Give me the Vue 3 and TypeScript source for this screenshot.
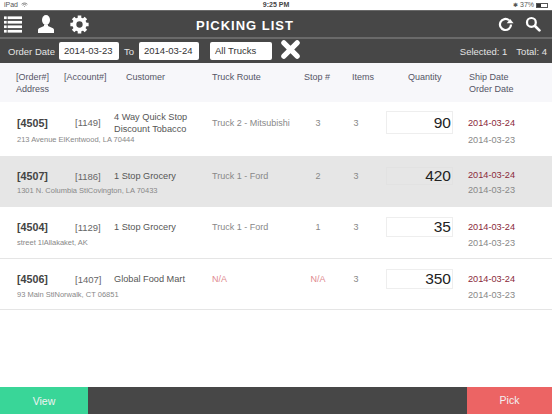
<script setup lang="ts">
interface PickRow {
  order: string;
  account: string;
  customer: string[];
  route: string;
  stop: string;
  items: string;
  qty: string;
  address: string;
  selected?: boolean;
}

const rows: PickRow[] = [
  { order: "[4505]", account: "[1149]", customer: ["4 Way Quick Stop", "Discount Tobacco"], route: "Truck 2 - Mitsubishi", stop: "3", items: "3", qty: "90", address: "213 Avenue ElKentwood, LA 70444" },
  { order: "[4507]", account: "[1186]", customer: ["1 Stop Grocery"], route: "Truck 1 - Ford", stop: "2", items: "3", qty: "420", address: "1301 N. Columbia StlCovington, LA 70433", selected: true },
  { order: "[4504]", account: "[1129]", customer: ["1 Stop Grocery"], route: "Truck 1 - Ford", stop: "1", items: "3", qty: "35", address: "street 1lAllakaket, AK" },
  { order: "[4506]", account: "[1407]", customer: ["Global Food Mart"], route: "N/A", stop: "N/A", items: "3", qty: "350", address: "93 Main StlNorwalk, CT 06851" },
];
</script>

<template>
  <div class="screen">
    <div class="status">
      <span class="status-left">
        iPad
        <svg class="wifi" viewBox="0 0 12 9" fill="none" stroke="#555" stroke-width="1.2">
          <path d="M1 3.2a7 7 0 0 1 10 0M2.8 5a4.4 4.4 0 0 1 6.4 0" />
          <circle cx="6" cy="7.2" r="0.8" fill="#555" stroke="none" />
        </svg>
      </span>
      <span class="status-time">9:25 PM</span>
      <span class="status-right">
        <span class="bt">✱</span> 37%
        <span class="battery"><span class="battery-fill" /></span>
      </span>
    </div>

    <header class="nav">
      <div class="nav-icons">
        <svg class="ic-list" viewBox="0 0 20 20" fill="#fff">
          <rect x="0" y="1" width="3" height="3" />
          <rect x="4" y="1" width="16" height="3" />
          <rect x="0" y="6" width="3" height="3" />
          <rect x="4" y="6" width="16" height="3" />
          <rect x="0" y="11" width="3" height="3" />
          <rect x="4" y="11" width="16" height="3" />
          <rect x="0" y="16" width="3" height="3" />
          <rect x="4" y="16" width="16" height="3" />
        </svg>
        <svg class="ic-user" viewBox="0 0 16 18" fill="#fff">
          <ellipse cx="8" cy="5" rx="4" ry="5" />
          <path d="M6 9.5h4v1.6l5 2.2c.7.4 1 1 1 1.7V18H0v-3c0-.7.3-1.3 1-1.7l5-2.2z" />
        </svg>
        <svg class="ic-gear" viewBox="0 0 24 24">
          <circle cx="12" cy="12" r="6.5" fill="none" stroke="#fff" stroke-width="5" />
          <path
            d="M12 0.5v5M12 18.5v5M0.5 12h5M18.5 12h5M3.9 3.9l3.5 3.5M16.6 16.6l3.5 3.5M20.1 3.9l-3.5 3.5M7.4 16.6l-3.5 3.5"
            stroke="#fff"
            stroke-width="4.5"
          />
        </svg>
      </div>
      <h1 class="title">PICKING LIST</h1>
      <div class="nav-actions">
        <svg class="ic-refresh" viewBox="0 0 20 20" fill="none">
          <path d="M16.5 10a6.5 6.5 0 1 1-2.3-5" stroke="#fff" stroke-width="2.6" />
          <path d="M11.5 8.5h8l-4-5z" fill="#fff" />
        </svg>
        <svg class="ic-search" viewBox="0 0 20 20" fill="none" stroke="#fff">
          <circle cx="8" cy="8" r="5.5" stroke-width="2.8" />
          <path d="M12.5 12.5l5.5 5.5" stroke-width="3.4" stroke-linecap="round" />
        </svg>
      </div>
    </header>

    <div class="filter">
      <span class="filter-label">Order Date</span>
      <span class="field date">2014-03-23</span>
      <span class="filter-to">To</span>
      <span class="field date">2014-03-24</span>
      <span class="field trucks">All Trucks</span>
      <svg class="ic-clear" viewBox="0 0 20 20">
        <path d="M3 3l14 14M17 3L3 17" stroke="#fff" stroke-width="5.5" stroke-linecap="round" />
      </svg>
      <span class="counts">Selected: 1<span class="total">Total: 4</span></span>
    </div>

    <div class="head">
      <div>[Order#]<br />Address</div>
      <div>[Account#]</div>
      <div>Customer</div>
      <div>Truck Route</div>
      <div>Stop #</div>
      <div>Items</div>
      <div>Quantity</div>
      <div>Ship Date<br />Order Date</div>
    </div>

    <div class="rows">
      <div v-for="row in rows" :key="row.order" class="row" :class="{ 'is-selected': row.selected }">
        <div class="row-order">{{ row.order }}</div>
        <div class="row-account">{{ row.account }}</div>
        <div class="row-customer">
          <div v-for="line in row.customer" :key="line">{{ line }}</div>
        </div>
        <div class="row-route" :class="{ 'is-na': row.route === 'N/A' }">{{ row.route }}</div>
        <div class="row-stop" :class="{ 'is-na': row.stop === 'N/A' }">{{ row.stop }}</div>
        <div class="row-items">{{ row.items }}</div>
        <div class="row-qty">{{ row.qty }}</div>
        <div class="row-dates">
          <div class="ship">2014-03-24</div>
          <div class="ordered">2014-03-23</div>
        </div>
        <div class="row-address">{{ row.address }}</div>
      </div>
    </div>

    <footer class="bottom">
      <button type="button" class="btn-view">View</button>
      <button type="button" class="btn-pick">Pick</button>
    </footer>
  </div>
</template>

<style scoped>
.screen {
  display: flex;
  flex-direction: column;
  width: 552px;
  height: 414px;
  overflow: hidden;
  background: #fff;
  font-family: "Liberation Sans", Arial, sans-serif;
  color: #555;
}

.status {
  display: grid;
  grid-template-columns: 1fr auto 1fr;
  align-items: center;
  flex: 0 0 10px;
  padding: 0 4px;
  background: #fff;
  font-size: 7px;
  line-height: 10px;
  color: #555;
}

.status-left {
  display: flex;
  align-items: center;
  gap: 3px;
}

.wifi {
  width: 7px;
  height: 6px;
}

.status-time {
  font-weight: 700;
  color: #444;
}

.status-right {
  display: flex;
  align-items: center;
  justify-content: flex-end;
  gap: 2px;
}

.bt {
  font-size: 6px;
}

.battery {
  display: inline-block;
  width: 12px;
  height: 5px;
  border: 1px solid #555;
  box-sizing: border-box;
}

.battery-fill {
  display: block;
  width: 4px;
  height: 3px;
  background: #333;
}

.nav {
  position: relative;
  display: flex;
  align-items: center;
  justify-content: space-between;
  flex: 0 0 29px;
  box-sizing: border-box;
  border-top: 1px solid #6a6a6a;
  border-bottom: 2px solid #6a6a6a;
  background: #474747;
}

.nav-icons {
  display: flex;
  align-items: center;
  gap: 16px;
  padding-left: 4px;
}

.ic-list {
  width: 18px;
  height: 19px;
}

.ic-user {
  width: 16px;
  height: 18px;
}

.ic-gear {
  width: 19px;
  height: 19px;
}

.title {
  position: absolute;
  left: 0;
  right: 62px;
  top: 7px;
  margin: 0;
  text-align: center;
  font-size: 13px;
  line-height: 16px;
  font-weight: 700;
  letter-spacing: 1px;
  color: #fff;
}

.nav-actions {
  display: flex;
  align-items: center;
  gap: 11px;
  padding-right: 11px;
}

.ic-refresh {
  width: 17px;
  height: 17px;
}

.ic-search {
  width: 16px;
  height: 16px;
}

.filter {
  display: flex;
  align-items: center;
  flex: 0 0 24px;
  padding-left: 8px;
  padding-right: 5px;
  background: #474747;
  font-size: 9.5px;
  color: #e4e4e4;
}

.filter-label {
  width: 51px;
}

.field {
  box-sizing: border-box;
  height: 18px;
  border-radius: 2px;
  background: #fff;
  color: #333;
  line-height: 18px;
  padding-left: 5px;
}

.date {
  width: 60px;
}

.filter-to {
  width: 20px;
  padding-left: 5px;
  box-sizing: border-box;
}

.trucks {
  width: 62px;
  margin-left: 11px;
}

.ic-clear {
  width: 19px;
  height: 19px;
  margin-left: 9px;
  margin-top: -3px;
}

.counts {
  margin-left: auto;
  white-space: nowrap;
}

.total {
  margin-left: 9px;
}

.head,
.row {
  display: grid;
  box-sizing: border-box;
}

.head {
  grid-template-columns: 48px 62px 86px 92px 48px 56px 61px 1fr;
  flex: 0 0 39px;
  padding: 8px 0 0 16px;
  background: #f7f7fa;
  font-size: 9px;
  line-height: 12px;
  color: #555566;
}

.rows {
  flex: 1 1 auto;
}

.row {
  grid-template-columns: 58px 39px 98px 92px 28px 54px 82px 1fr;
  grid-template-rows: 20px 10px;
  align-items: center;
  height: 51px;
  padding: 10px 0 0 17px;
  border-bottom: 1px solid #e5e5e5;
  font-size: 9.5px;
  color: #666;
}

.row:first-child {
  grid-template-rows: 23px 10px;
  height: 54px;
  padding-top: 9px;
  border-bottom: 0;
}

.row:nth-child(3) {
  height: 52px;
}

.row.is-selected {
  grid-template-rows: 18px 10px;
  padding-top: 11px;
  background: #e6e6e6;
  border-bottom: 0;
}

.row-order {
  font-size: 10.7px;
  font-weight: 700;
  color: #444;
}

.row-customer {
  padding-top: 2px;
  font-size: 9.2px;
  line-height: 11.5px;
  color: #555;
}

.row-route,
.row-stop,
.row-items {
  color: #888;
  font-size: 9px;
}

.row-stop,
.row-items {
  text-align: center;
}

.row-items {
  padding-right: 6px;
}

.row .is-na {
  color: #e08a8f;
}

.row-qty {
  box-sizing: border-box;
  width: 67px;
  height: 20px;
  padding-right: 1px;
  border: 1px solid #eee;
  background: #fff;
  text-align: right;
  font-size: 15.5px;
  line-height: 18px;
  color: #222;
}

.row:first-child .row-qty {
  height: 23px;
  line-height: 21px;
}

.is-selected .row-qty {
  height: 18px;
  line-height: 16px;
  border-color: #e2e2e2;
  background: #e6e6e6;
}

.row-dates {
  grid-row: 1 / span 2;
  grid-column: 8;
  align-self: start;
  padding-top: 2px;
  font-size: 9.2px;
  line-height: 16px;
}

.row:first-child .row-dates {
  padding-top: 4px;
  line-height: 17px;
}

.is-selected .row-dates {
  padding-top: 1px;
  line-height: 15px;
}

.ship {
  color: #8a2a3a;
}

.ordered {
  color: #888;
}

.row-address {
  grid-column: 1 / span 5;
  padding-top: 1px;
  font-size: 7.5px;
  line-height: 9px;
  color: #888;
}

.bottom {
  display: flex;
  justify-content: space-between;
  flex: 0 0 27px;
  background: #474747;
}

.bottom button {
  border: 0;
  padding: 0;
  font-family: inherit;
  font-size: 10.5px;
  color: #f2f2f2;
}

.btn-view {
  width: 88px;
  background: #39d698;
}

.bottom .btn-pick {
  width: 85px;
  padding-bottom: 2px;
  background: #ec6464;
}
</style>
